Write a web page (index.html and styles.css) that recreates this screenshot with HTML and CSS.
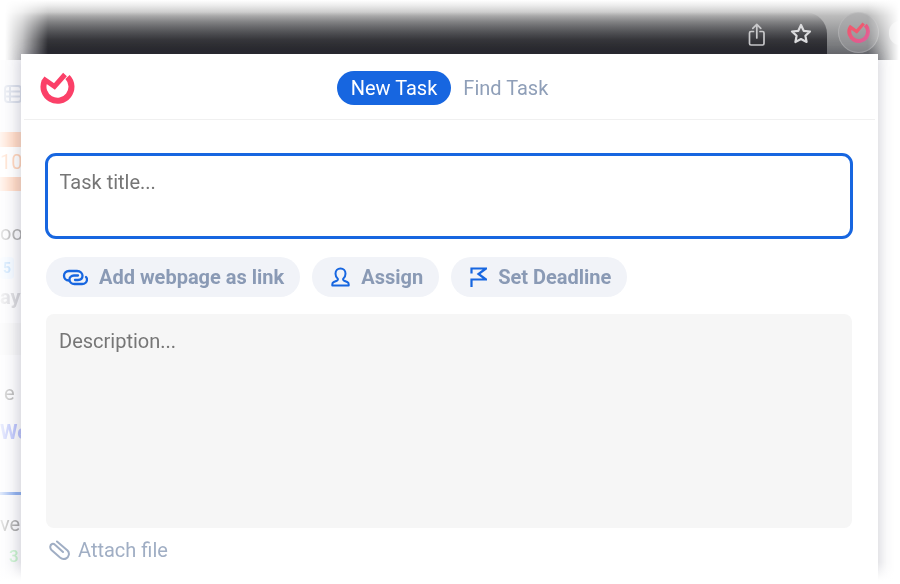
FILE: index.html
```html
<!DOCTYPE html>
<html lang="en">
<head>
    <meta charset="UTF-8">
    <meta name="viewport" content="width=device-width, initial-scale=1.0">
    <title>New Task</title>
    <link rel="stylesheet" href="styles.css">
</head>
<body>
    <div class="toolbar">
        <div class="address-bar">
            <svg class="bar-icon" width="18" height="23" viewBox="0 0 18 23" fill="none" stroke="#c9c9cb" stroke-width="1.700" stroke-linejoin="round" stroke-linecap="round">
                <path d="M5.500 8.500H3a1.500 1.500 0 0 0-1.500 1.500v10.500A1.500 1.500 0 0 0 3 22h11.500a1.500 1.500 0 0 0 1.500-1.500V10a1.500 1.500 0 0 0-1.500-1.500H12"/>
                <path d="M8.800 15V1.500M4.800 5.300l4-4 4 4"/>
            </svg>
            <svg class="bar-icon" width="22" height="21" viewBox="0 0 22 21" fill="none" stroke="#dcdcde" stroke-width="2.200" stroke-linejoin="round">
                <path d="M11 2l2.700 5.800 6.300.7-4.600 4.300 1.200 6.200L11 16l-5.600 3 1.200-6.200L2 8.500l6.300-.7z"/>
            </svg>
        </div>
        <div class="extension">
            <svg width="24" height="23" viewBox="0 0 36 34" fill="none" stroke-width="6">
                <defs>
                    <linearGradient id="extGrad" x1="0" y1="0" x2="1" y2="1">
                        <stop offset="0" stop-color="#f0566a"/>
                        <stop offset="1" stop-color="#e0609c"/>
                    </linearGradient>
                </defs>
                <path d="M27.500 6A14 14 0 1 1 4.500 10.500" stroke="url(#extGrad)"/>
                <path d="M3 7.500l11.500 8L25 3.500" stroke="#ef5a70" stroke-width="5"/>
            </svg>
        </div>
        <div class="profile"></div>
    </div>

    <!-- page behind the popup, only a sliver shows -->
    <div class="backdrop">
        <svg class="frag-list" width="18" height="18" viewBox="0 0 18 18" fill="none" stroke="#d9deea" stroke-width="2">
            <rect x="1" y="1" width="16" height="16" rx="3"/>
            <path d="M1 6.500h16M1 11.500h16M6 1v16"/>
        </svg>
        <div class="frag-orange"><span>10</span></div>
        <span class="frag-text frag-oo">oo</span>
        <span class="frag-badge">5</span>
        <span class="frag-text frag-ay">ay</span>
        <div class="frag-row"></div>
        <span class="frag-text frag-e">e</span>
        <span class="frag-text frag-we">We</span>
        <div class="frag-line"></div>
        <span class="frag-text frag-ve">ve</span>
        <span class="frag-text frag-three">3</span>
    </div>

    <div class="popup">
        <header class="popup-header">
            <svg class="logo" width="36" height="34" viewBox="0 0 36 34" fill="none" stroke="#fb4068" stroke-width="6">
                <path d="M27.500 6A14 14 0 1 1 4.500 10.500"/>
                <path d="M3 7.500l11.500 8L25 3.500" stroke-width="5"/>
            </svg>
            <nav class="tabs">
                <span class="tab tab-active">New Task</span>
                <span class="tab">Find Task</span>
            </nav>
        </header>
        <div class="popup-body">
            <div class="title-input">Task title...</div>
            <div class="chips">
                <span class="chip chip-link">
                    <svg width="26" height="17" viewBox="0 0 26 17" fill="none" stroke="#1766e0" stroke-width="2.300" stroke-linecap="round">
                        <path d="M7 11.500C3.500 11.500 2 9 2 6.800 2 4 4 2 7 2h8c3.500 0 5.500 2.500 5.500 4.800 0 2.700-2 4.200-4.500 4.200h-3"/>
                        <path d="M16 6.500h-4c-3 0-4.500 2-4.500 4 0 2.500 2 4.500 5 4.500H20c3 0 5-2 5-4.500 0-1-.5-2-1-2.500"/>
                    </svg>
                    Add webpage as link
                </span>
                <span class="chip">
                    <svg width="19" height="20" viewBox="0 0 19 20" fill="none" stroke="#1766e0" stroke-width="2" stroke-linejoin="round">
                        <path d="M9.500 1.500c-3 0-5 2.200-5 5.200 0 2.200 1 4 2.300 5 .4.800-.1 1.700-1 2.100l-3 1.200c-1 .4-1.500 1.200-1.500 2.200v1.300h16.400V17.200c0-1-.5-1.800-1.500-2.200l-3-1.200c-.9-.4-1.400-1.300-1-2.100 1.300-1 2.300-2.800 2.300-5 0-3-2-5.200-5-5.200z"/>
                    </svg>
                    Assign
                </span>
                <span class="chip">
                    <svg width="17" height="20" viewBox="0 0 17 20" fill="none" stroke="#1766e0" stroke-width="2.200" stroke-linejoin="miter">
                        <path d="M1.500 6.500V1.500H16l-7.500 5.500 7.500 5.500H1.500V20"/>
                    </svg>
                    Set Deadline
                </span>
            </div>
            <div class="description">Description...</div>
            <div class="attach">
                <svg width="21" height="20" viewBox="0 0 21 20" fill="none" stroke="#a0aec4" stroke-width="2" stroke-linecap="round">
                    <path d="M8 1.500l10.500 9c2.500 2.500 1.500 6.500-1.500 8-2 1-4 .5-6-1l-8.500-7.500c-2-2-1.500-5 .5-6 1.300-.7 2.200 0 3 .8l8 7.200"/>
                </svg>
                Attach file
            </div>
        </div>
    </div>

    <div class="bottom-fade"></div>
</body>
</html>
```
FILE: styles.css
```css
* {
    box-sizing: border-box;
}

body {
    margin: 0;
    width: 900px;
    height: 584px;
    overflow: hidden;
    position: relative;
    background-color: #fff;
    font-family: Roboto, sans-serif;
}

/* browser chrome, faded out on all sides */
.toolbar {
    height: 60px;
    display: flex;
    align-items: flex-start;
    padding-top: 12px;
    background: linear-gradient(to bottom, #fff 0, #eee 5px, #bbb 16px, #8d8e90 36px, #606264 60px);
    -webkit-mask-image: linear-gradient(to right, transparent 5px, rgba(0, 0, 0, .3) 22px, #000 48px, #000 868px, transparent 899px);
    mask-image: linear-gradient(to right, transparent 5px, rgba(0, 0, 0, .3) 22px, #000 48px, #000 868px, transparent 899px);
}

.address-bar {
    width: 827px;
    height: 48px;
    margin-right: 11px;
    border-radius: 0 22px 0 0;
    display: flex;
    justify-content: flex-end;
    align-items: flex-start;
    gap: 24px;
    padding: 11px 15px 0 0;
    background: linear-gradient(to bottom, rgba(37, 37, 42, 0) 0, rgba(37, 37, 42, .32) 10px, rgba(37, 37, 42, .82) 28px, #25252a 40px);
}

.extension {
    width: 41px;
    height: 41px;
    border-radius: 50%;
    display: flex;
    align-items: center;
    justify-content: center;
    background-color: rgba(165, 165, 167, .55);
    border: 1px solid rgba(205, 205, 205, .35);
}

.profile {
    width: 11px;
    height: 24px;
    margin: 9px 0 0 10px;
    border-radius: 12px 0 0 12px;
    background-color: rgba(255, 255, 255, .5);
}

.backdrop {
    width: 21px;
    height: 524px;
    display: flex;
    flex-direction: column;
    align-items: flex-start;
    background-color: #fafafc;
    filter: blur(.7px);
    -webkit-mask-image: linear-gradient(to right, rgba(0, 0, 0, .25), #000 16px);
    mask-image: linear-gradient(to right, rgba(0, 0, 0, .25), #000 16px);
}

.frag-list {
    margin: 25px 0 0 4px;
}

.frag-orange {
    margin-top: 29px;
    width: 21px;
    height: 59px;
    display: flex;
    align-items: center;
    background: linear-gradient(#ffd9c4 0, #ffd9c4 15px, #fff 15px, #fff 45px, #ffd9c4 45px);
    color: #ffd3b8;
    font-size: 20px;
}

.frag-text {
    font-size: 20px;
    line-height: 24px;
    color: #9a9a9a;
    white-space: nowrap;
}

.frag-oo {
    margin-top: 30px;
    opacity: .8;
}

.frag-badge {
    margin-top: 12px;
    padding: 3px 3px;
    height: 22px;
    font-size: 14px;
    font-weight: 700;
    color: #bcdcfb;
    background-color: #f0f7ff;
    border-radius: 4px;
}

.frag-ay {
    margin-top: 6px;
    font-weight: 700;
    color: #d6d6da;
}

.frag-row {
    margin-top: 14px;
    width: 21px;
    height: 32px;
    background-color: #f5f5f6;
}

.frag-e {
    margin-top: 26px;
    margin-left: 4px;
    color: #b0b0b0;
}

.frag-we {
    margin-top: 15px;
    font-weight: 700;
    color: #b9c2fa;
}

.frag-line {
    margin-top: 48px;
    width: 21px;
    height: 3px;
    background-color: #8fb0ee;
}

.frag-ve {
    margin-top: 17px;
    color: #a9a9a9;
}

.frag-three {
    margin-top: 8px;
    margin-left: 9px;
    font-weight: 500;
    font-size: 17px;
    color: #c6f1cc;
}

/* popup opened from the extension button */
.popup {
    position: absolute;
    left: 21px;
    top: 54px;
    width: 857px;
    height: 530px;
    background-color: #fff;
    box-shadow: 0 0 14px rgba(60, 60, 90, .28);
    filter: blur(.3px);
}

.popup-header {
    position: relative;
    height: 66px;
    margin: 0 3px;
    display: flex;
    justify-content: center;
    align-items: center;
    border-bottom: 1px solid #f0f0f0;
    padding-top: 3px;
}

.logo {
    position: absolute;
    left: 16px;
    top: 17px;
}

.tabs {
    display: flex;
    align-items: center;
}

.tab {
    height: 34px;
    padding: 0 14px 0 12px;
    font-size: 20px;
    line-height: 34px;
    color: #8f9fb8;
    border-radius: 17px;
}

.tab-active {
    padding: 0 14px;
    background-color: #1766e0;
    color: #fff;
}

.popup-body {
    padding: 33px 26px 0 25px;
}

.title-input {
    height: 86px;
    margin: 0 -1px;
    padding: 13.500px 11.500px;
    border: 3px solid #1766e0;
    border-radius: 11px;
    font-size: 20px;
    line-height: 24px;
    color: #767676;
}

.chips {
    display: flex;
    gap: 12px;
    margin-top: 18px;
}

.chip {
    height: 40px;
    display: flex;
    align-items: center;
    gap: 11px;
    padding: 0 16px 0 19px;
    border-radius: 20px;
    background-color: #f1f3f8;
    color: #8a9ab5;
    font-size: 20px;
    font-weight: 700;
    white-space: nowrap;
}

.chip-link {
    padding-left: 16px;
}

.description {
    height: 214px;
    margin-top: 17px;
    padding: 15px 13px;
    border-radius: 8px;
    background-color: #f6f6f6;
    font-size: 20px;
    line-height: 24px;
    color: #767676;
}

.attach {
    display: flex;
    align-items: center;
    gap: 8px;
    margin-top: 10px;
    padding-left: 3px;
    font-size: 20px;
    line-height: 24px;
    color: #a0aec4;
}

.bottom-fade {
    position: absolute;
    left: 0;
    right: 0;
    bottom: 0;
    height: 22px;
    background: linear-gradient(to bottom, rgba(255, 255, 255, 0), #fff 85%);
}
```
